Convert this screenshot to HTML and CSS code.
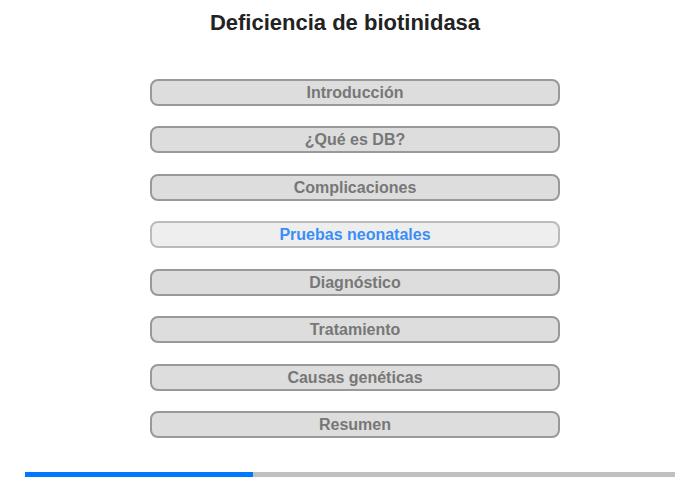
FILE: index.html
```html
<!DOCTYPE html>
<html lang="es">
<head>
<meta charset="utf-8">
<link rel="stylesheet" href="styles.css">
</head>
<body>
<div class="page">
  <h1 class="title">Deficiencia de biotinidasa</h1>
  <nav class="menu">
    <div class="item">Introducción</div>
    <div class="item">¿Qué es DB?</div>
    <div class="item">Complicaciones</div>
    <div class="item active">Pruebas neonatales</div>
    <div class="item">Diagnóstico</div>
    <div class="item">Tratamiento</div>
    <div class="item">Causas genéticas</div>
    <div class="item">Resumen</div>
  </nav>
  <div class="progress"><div class="progress-fill" style="width:35%"></div></div>
</div>
</body>
</html>
```
FILE: styles.css
```css
html, body {
  margin: 0;
  padding: 0;
  background: #fff;
}
body {
  font-family: "Liberation Sans", Arial, sans-serif;
}
.page {
  width: 700px;
  height: 480px;
  display: flex;
  flex-direction: column;
  align-items: center;
}
.title {
  margin: 10px 10px 0 0;
  font-size: 22px;
  line-height: 26px;
  font-weight: bold;
  color: #222;
}
.menu {
  margin: 43px 0 0 150px;
  align-self: flex-start;
  display: flex;
  flex-direction: column;
  gap: 20.43px;
  width: 410px;
}
.item {
  box-sizing: border-box;
  height: 27px;
  border: 2px solid #999;
  border-radius: 8px;
  background: #ddd;
  color: #777;
  font-size: 16px;
  font-weight: bold;
  text-align: center;
  line-height: 23px;
}
.item.active {
  background: #eee;
  border-color: #bbb;
  color: #3a8ef6;
}
.progress {
  margin-top: 34px;
  width: 650px;
  height: 5px;
  background: #c0c0c0;
}
.progress-fill {
  height: 100%;
  background: #0077ff;
}
```
